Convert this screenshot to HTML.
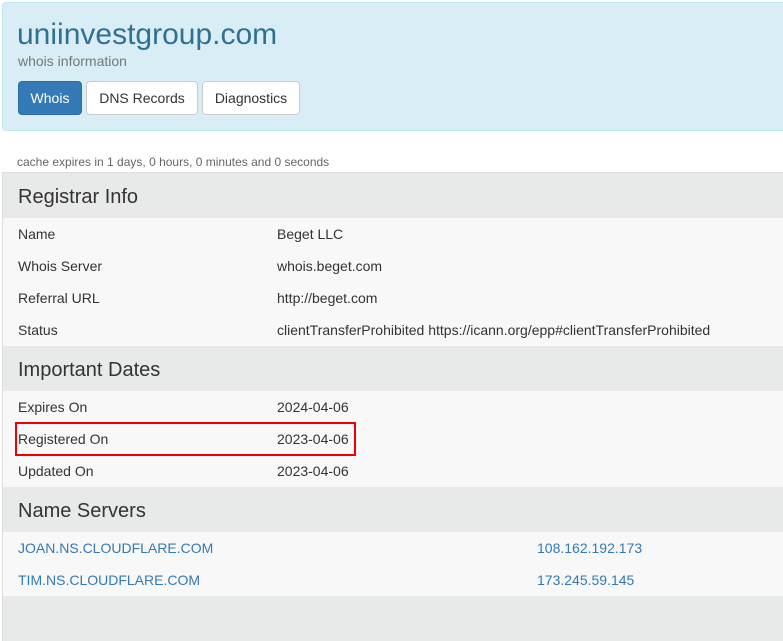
<!DOCTYPE html>
<html><head><style>
body{margin:0;width:783px;height:605px;overflow:hidden;background:#fff;font-family:"Liberation Sans",Arial,sans-serif;color:#333;position:relative}
.j{position:absolute;left:2px;top:2px;width:790px;height:129px;background:#d9edf7;border:1px solid #bce8f1;border-radius:4px;box-sizing:border-box}
.t{position:absolute;left:17px;top:18px;font-size:30px;color:#31708f}
.s{position:absolute;left:18px;top:53px;font-size:14px;color:#777}
.b{position:absolute;top:81px;height:34px;box-sizing:border-box;border:1px solid #ccc;background:#fff;border-radius:4px;font-size:14px;line-height:32px;text-align:center;color:#333}
.c{position:absolute;left:17px;top:155px;font-size:12px;color:#666}
.tb{position:absolute;left:2px;top:172px;width:790px;border-left:1px solid #ddd;border-top:1px solid #ddd}
.h{height:45px;background:#e8e9e9;font-size:20px;line-height:49px;padding-left:15px;box-sizing:border-box}
.r{height:32px;background:#f8f8f8;font-size:14px;line-height:32px;position:relative;padding-left:15px}
.r span{position:absolute;left:274px}
.r a{color:#337ab7}
.r a.ip{position:absolute;left:534px}
.rb{position:absolute;left:15px;top:422px;width:341px;height:34px;border:2px solid #e00;box-sizing:border-box}
</style></head><body>
<div class="j"></div>
<div class="t">uniinvestgroup.com</div>
<div class="s">whois information</div>
<div class="b" style="left:18px;width:64px;background:#337ab7;border-color:#2e6da4;color:#fff">Whois</div>
<div class="b" style="left:86px;width:112px">DNS Records</div>
<div class="b" style="left:202px;width:98px">Diagnostics</div>
<div class="c">cache expires in 1 days, 0 hours, 0 minutes and 0 seconds</div>
<div class="tb">
<div class="h">Registrar Info</div>
<div class="r">Name<span>Beget LLC</span></div>
<div class="r">Whois Server<span>whois.beget.com</span></div>
<div class="r">Referral URL<span>http://beget.com</span></div>
<div class="r">Status<span>clientTransferProhibited https://icann.org/epp#clientTransferProhibited</span></div>
<div class="h">Important Dates</div>
<div class="r">Expires On<span>2024-04-06</span></div>
<div class="r">Registered On<span>2023-04-06</span></div>
<div class="r">Updated On<span>2023-04-06</span></div>
<div class="h">Name Servers</div>
<div class="r"><a>JOAN.NS.CLOUDFLARE.COM</a><a class="ip">108.162.192.173</a></div>
<div class="r"><a>TIM.NS.CLOUDFLARE.COM</a><a class="ip">173.245.59.145</a></div>
<div class="h"></div>
</div>
<div class="rb"></div>
</body></html>
